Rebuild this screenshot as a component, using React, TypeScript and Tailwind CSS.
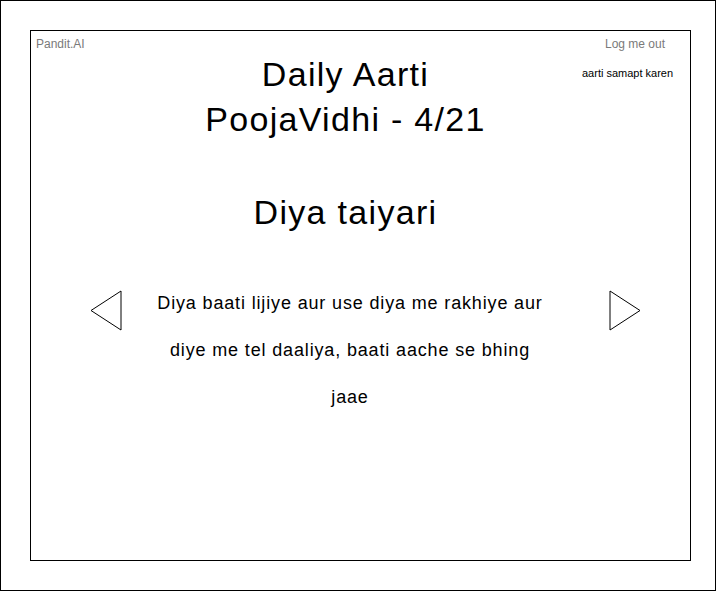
function Arrow({ dir }: { dir: "left" | "right" }) {
  const points = dir === "left" ? "31,1 31,40 1,20.5" : "1,1 1,40 31,20.5";
  return (
    <svg width="32" height="41" viewBox="0 0 32 41" className="shrink-0">
      <polygon points={points} fill="white" stroke="black" strokeWidth="1" />
    </svg>
  );
}

export default function App() {
  return (
    <div className="w-[716px] h-[591px] border border-black bg-white font-['Liberation_Sans',Arial,sans-serif] text-black">
      <div className="ml-[29px] mt-[29px] w-[661px] h-[531px] border border-black">
        {/* Header + titles */}
        <div className="flex">
          <div className="w-[90px] pl-[5px] pt-[6px] text-[12px] leading-[14px] text-[#7a7a7a]">
            Pandit.AI
          </div>
          <div className="flex-1 pt-[21px] flex flex-col items-center tracking-[1.3px]">
            <div className="text-[34px] leading-[45px]">Daily Aarti</div>
            <div className="text-[34px] leading-[45px]">PoojaVidhi - 4/21</div>
            <div className="mt-[48px] text-[34px] leading-[45px]">Diya taiyari</div>
          </div>
          <div className="w-[120px] pt-[6px] flex flex-col">
            <div className="pl-[35px] text-[12px] leading-[14px] text-[#7a7a7a]">Log me out</div>
            <div className="mt-[15px] pl-[12px] text-[11px] leading-[15px]">aarti samapt karen</div>
          </div>
        </div>

        {/* Step content */}
        <div className="mt-[45px] flex items-start pl-[59px]">
          <div className="mt-[10px]">
            <Arrow dir="left" />
          </div>
          <div className="ml-[28px] w-[400px] text-center text-[18px] leading-[47px] tracking-[0.85px]">
            Diya baati lijiye aur use diya me rakhiye aur diye me tel daaliya, baati aache se bhing jaae
          </div>
          <div className="mt-[10px] ml-[59px]">
            <Arrow dir="right" />
          </div>
        </div>
      </div>
    </div>
  );
}
